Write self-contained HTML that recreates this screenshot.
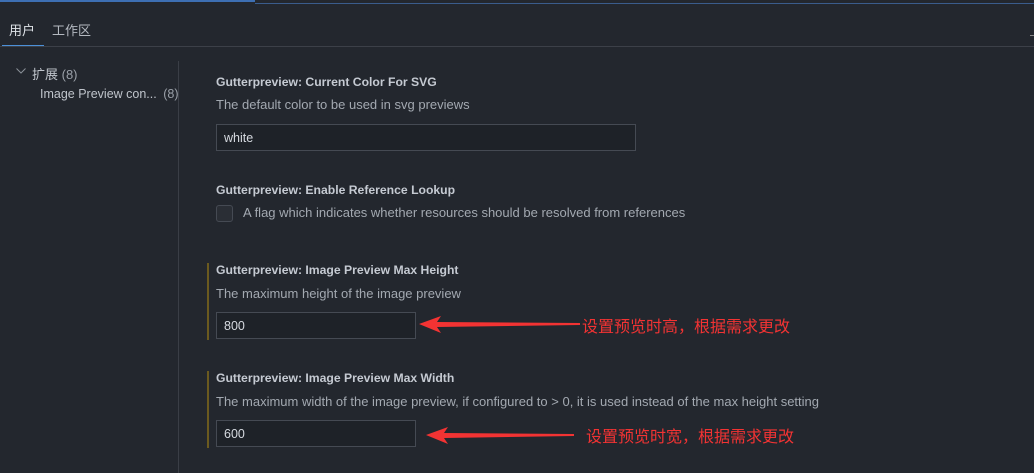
<!DOCTYPE html>
<html><head><meta charset="utf-8"><style>
body{margin:0;width:1034px;height:473px;background:#23272e;font-family:"Liberation Sans","Noto Sans CJK SC",sans-serif;color:#c9ced6;position:relative;overflow:hidden}
.a{position:absolute;white-space:nowrap}
.t{font-size:12.2px;font-weight:bold;color:#c5cad2}
.d{font-size:13px;color:#a3a9b1}
.in{position:absolute;height:25px;border:1px solid #454a53;background:#1e2228;box-sizing:border-box;font-size:12.5px;color:#d6dae0;padding:5px 0 0 7px}
.bar{position:absolute;left:207px;width:2px;background:#6b5a1f}
.red{color:#f33333;font-size:16px}
</style></head><body>
<div class="a" style="left:0;top:0;width:255px;height:2px;background:#3d6fb3"></div>
<div class="a" style="left:255px;top:3px;width:779px;height:1px;background:#3a5c8c"></div>
<div class="a" style="left:9px;top:20px;font-size:13px;color:#dfe3e8">用户</div>
<div class="a" style="left:52px;top:20px;font-size:13px;color:#b4b9c0">工作区</div>
<div class="a" style="left:2px;top:45px;width:42px;height:2px;background:#4c90d8"></div>
<div class="a" style="left:0;top:46px;width:1034px;height:1px;background:#3c4048"></div>
<div class="a" style="left:1030px;top:35px;width:4px;height:1px;background:#888"></div>
<svg class="a" style="left:16px;top:68px" width="10" height="6"><polyline points="0.5,0.5 5,5 9.5,0.5" fill="none" stroke="#8a9098" stroke-width="1"/></svg>
<div class="a" style="left:32px;top:64px;font-size:13px;color:#bfc4cb">扩展 <span style="color:#9aa0a8">(8)</span></div>
<div class="a" style="left:40px;top:87px;font-size:12.5px;color:#bfc4cb">Image Preview con... <span style="color:#9aa0a8;margin-left:3px">(8)</span></div>
<div class="a" style="left:178px;top:61px;width:1px;height:412px;background:#3a3e46"></div>

<div class="a t" style="left:216px;top:75px">Gutterpreview: Current Color For SVG</div>
<div class="a d" style="left:216px;top:97px">The default color to be used in svg previews</div>
<div class="in" style="left:216px;top:124px;width:420px;height:27px;padding-top:6px">white</div>

<div class="a t" style="left:216px;top:183px">Gutterpreview: Enable Reference Lookup</div>
<div class="a" style="left:216px;top:205px;width:17px;height:17px;border:1px solid #454a53;background:#2a2e35;border-radius:3px;box-sizing:border-box"></div>
<div class="a d" style="left:243px;top:205px">A flag which indicates whether resources should be resolved from references</div>

<div class="bar" style="top:263px;height:77px"></div>
<div class="a t" style="left:216px;top:263px">Gutterpreview: Image Preview Max Height</div>
<div class="a d" style="left:216px;top:286px">The maximum height of the image preview</div>
<div class="in" style="left:216px;top:312px;width:200px;height:27px;padding-top:6px">800</div>

<div class="bar" style="top:371px;height:77px"></div>
<div class="a t" style="left:216px;top:371px">Gutterpreview: Image Preview Max Width</div>
<div class="a d" style="left:216px;top:394px">The maximum width of the image preview, if configured to &gt; 0, it is used instead of the max height setting</div>
<div class="in" style="left:216px;top:420px;width:200px;height:27px;padding-top:6px">600</div>

<svg class="a" style="left:415px;top:312px" width="165" height="25"><polygon points="4,12 26,4 22,10 165,11 165,13 22,15 26,21" fill="#f33333"/></svg>
<svg class="a" style="left:424px;top:423px" width="150" height="25"><polygon points="2,12 24,4 20,10 150,11 150,13 20,15 24,21" fill="#f33333"/></svg>
<div class="a red" style="left:582px;top:313px">设置预览时高，根据需求更改</div>
<div class="a red" style="left:586px;top:423px">设置预览时宽，根据需求更改</div>
</body></html>
